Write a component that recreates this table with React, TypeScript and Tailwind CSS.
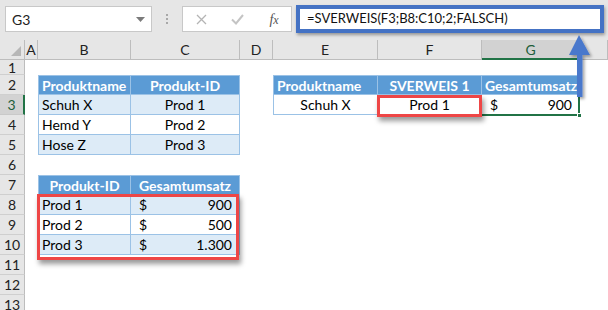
import React from "react";

type CellDef = { cls: string; node?: React.ReactNode };

const HDR = "bg-[#5b9bd5] text-white font-bold border-r border-b border-t border-[#9bc2e6]";
const BAND = "bg-[#ddebf7] border-r border-b border-[#9bc2e6]";
const PLAIN = "bg-white border-r border-b border-[#9bc2e6]";

const money = (v: string) => (
  <div className="flex w-full justify-between pl-[8px] pr-[7px]">
    <span>$</span>
    <span>{v}</span>
  </div>
);

const cells: Record<string, CellDef> = {
  B2: { cls: `${HDR} border-l pl-[3px]`, node: "Produktname" },
  C2: { cls: `${HDR} justify-center`, node: "Produkt-ID" },
  B3: { cls: `${BAND} border-l pl-[3px]`, node: "Schuh X" },
  C3: { cls: `${BAND} justify-center`, node: "Prod 1" },
  B4: { cls: `${PLAIN} border-l pl-[3px]`, node: "Hemd Y" },
  C4: { cls: `${PLAIN} justify-center`, node: "Prod 2" },
  B5: { cls: `${BAND} border-l pl-[3px]`, node: "Hose Z" },
  C5: { cls: `${BAND} justify-center`, node: "Prod 3" },
  B7: { cls: `${HDR} border-l justify-center`, node: "Produkt-ID" },
  C7: { cls: `${HDR} justify-center`, node: "Gesamtumsatz" },
  B8: { cls: `${BAND} border-l pl-[3px]`, node: "Prod 1" },
  C8: { cls: `${BAND}`, node: money("900") },
  B9: { cls: `${PLAIN} border-l pl-[3px]`, node: "Prod 2" },
  C9: { cls: `${PLAIN}`, node: money("500") },
  B10: { cls: `${BAND} border-l pl-[3px]`, node: "Prod 3" },
  C10: { cls: `${BAND}`, node: money("1.300") },
  E2: { cls: `${HDR} border-l pl-[3px]`, node: "Produktname" },
  F2: { cls: `${HDR} justify-center`, node: "SVERWEIS 1" },
  G2: { cls: `${HDR} pl-[3px]`, node: "Gesamtumsatz" },
  E3: { cls: `${PLAIN} border-l justify-center`, node: "Schuh X" },
  F3: { cls: `${PLAIN} justify-center`, node: "Prod 1" },
  G3: { cls: `${PLAIN}`, node: money("900") },
};

const colLetters = ["A", "B", "C", "D", "E", "F", "G", "H"];
const rowNums = [1, 2, 3, 4, 5, 6, 7, 8, 9, 10, 11, 12, 13];

function TopBar() {
  return (
    <div className="flex h-[40px] items-start bg-[#e6e6e6] pt-[6px] pl-[5px]">
      <div className="flex h-[26px] w-[147px] items-center justify-between border border-[#c8c8c8] bg-white pl-[6px] pr-[6px] text-[14px] text-[#222]">
        <span>G3</span>
        <svg width="9" height="5" viewBox="0 0 9 5">
          <path d="M0 0 L9 0 L4.5 5 Z" fill="#7b7b7b" />
        </svg>
      </div>
      <div className="flex h-[26px] w-[30px] flex-col items-center justify-center gap-[2px]">
        <div className="h-[2px] w-[2px] bg-[#a8a8a8]" />
        <div className="h-[2px] w-[2px] bg-[#a8a8a8]" />
        <div className="h-[2px] w-[2px] bg-[#a8a8a8]" />
      </div>
      <div className="flex h-[26px] w-[110px] items-center border border-[#c8c8c8] bg-white">
        <div className="flex w-[36px] justify-center">
          <svg width="11" height="11" viewBox="0 0 11 11">
            <path d="M1 1 L10 10 M10 1 L1 10" stroke="#b4b4b4" strokeWidth="1.3" />
          </svg>
        </div>
        <div className="flex w-[36px] justify-center">
          <svg width="13" height="11" viewBox="0 0 13 11">
            <path d="M1 5.5 L5 9.5 L12 1" stroke="#c4c4c4" strokeWidth="2" fill="none" />
          </svg>
        </div>
        <div className="flex w-[36px] justify-center pl-[2px]">
          <span className="text-[14px] italic text-[#555]" style={{ fontFamily: '"Liberation Serif", serif' }}>
            f<span className="text-[12px]">x</span>
          </span>
        </div>
      </div>
      <div className="ml-[4px] mt-[-1px] flex h-[28px] w-[308px] items-center border-[4px] border-[#4472c4] bg-white pl-[7px] text-[13px] text-[#111] shadow-[1px_2px_3px_rgba(0,0,0,0.35)]">
        =SVERWEIS(F3;B8:C10;2;FALSCH)
      </div>
    </div>
  );
}

function Sheet() {
  const out: React.ReactNode[] = [];
  out.push(
    <div key="corner" className="relative border-r border-b border-[#bdbdbd] bg-[#e6e6e6]">
      <svg className="absolute right-[3px] bottom-[3px]" width="10" height="10" viewBox="0 0 10 10">
        <path d="M10 0 L10 10 L0 10 Z" fill="#b7b7b7" />
      </svg>
    </div>
  );
  colLetters.forEach((c) => {
    const sel = c === "G";
    out.push(
      <div
        key={"h" + c}
        className={
          sel
            ? "flex items-center justify-center border-r border-b-2 border-r-[#bdbdbd] border-b-[#217346] bg-[#d2d2d2] text-[14px] text-[#1f5e3a]"
            : "flex items-center justify-center border-r border-b border-[#bdbdbd] bg-[#e6e6e6] text-[14px] text-[#222]"
        }
      >
        {c === "H" ? "" : c}
      </div>
    );
  });
  rowNums.forEach((r) => {
    const sel = r === 3;
    out.push(
      <div
        key={"r" + r}
        className={
          sel
            ? "flex items-center justify-center border-r-2 border-b border-r-[#217346] border-b-[#c9c9c9] bg-[#d2d2d2] text-[14px] text-[#1f5e3a]"
            : "flex items-center justify-center border-r border-b border-r-[#bdbdbd] border-b-[#cfcfcf] bg-[#e6e6e6] text-[14px] text-[#222]"
        }
      >
        {r}
      </div>
    );
    colLetters.forEach((c) => {
      const def = cells[c + r];
      out.push(
        <div
          key={c + r}
          className={
            "flex items-center overflow-hidden whitespace-nowrap text-[14px] text-black " +
            (def ? def.cls : "bg-white")
          }
        >
          {def ? def.node : null}
        </div>
      );
    });
  });
  return (
    <div className="grid grid-cols-[25px_13px_93px_109px_33px_105px_104px_98px_28px] grid-rows-[20px_15px_repeat(12,20px)]">
      {out}
    </div>
  );
}

export default function App() {
  return (
    <div
      className="relative h-[310px] w-[608px] overflow-hidden bg-white"
      style={{ fontFamily: 'Lato, "Liberation Sans", sans-serif' }}
    >
      <TopBar />
      <Sheet />
      <div className="absolute left-[482px] top-[95px] h-[21px] w-[98px] border-r-2 border-b-2 border-[#217346]" />
      <div className="absolute left-[577px] top-[113px] h-[5px] w-[5px] border border-white bg-[#217346]" />
      <div className="absolute left-[37px] top-[194px] h-[66px] w-[202px] border-[3px] border-[#ee4646] shadow-[2px_4px_5px_rgba(0,0,0,0.4)]" />
      <div className="absolute left-[377px] top-[95px] h-[22px] w-[105px] border-[3px] border-[#ee4646] shadow-[2px_4px_5px_rgba(0,0,0,0.4)]" />
      <svg className="absolute left-[564px] top-[32px]" width="34" height="72" viewBox="0 0 34 72">
        <defs>
          <filter id="sh" x="-50%" y="-20%" width="200%" height="150%">
            <feDropShadow dx="2" dy="2" stdDeviation="1.5" floodColor="#000" floodOpacity="0.35" />
          </filter>
        </defs>
        <path d="M15 3 L26 23 L18.5 23 L18.5 65 L13 65 L13 23 L5 23 Z" fill="#4a78cc" filter="url(#sh)" />
      </svg>
    </div>
  );
}
